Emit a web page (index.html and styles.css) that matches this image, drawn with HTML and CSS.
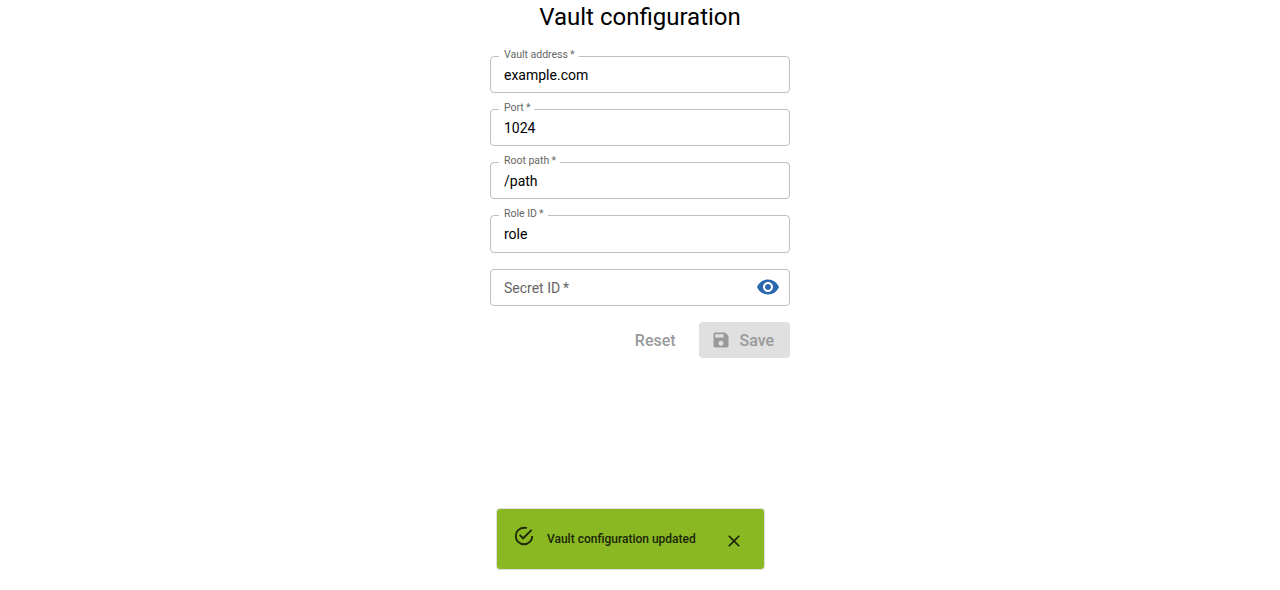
FILE: index.html
```html
<!DOCTYPE html>
<html lang="en">
<head>
<meta charset="utf-8">
<title>Vault configuration</title>
<link rel="stylesheet" href="styles.css">
</head>
<body>
<main class="page">
  <h1 class="title">Vault configuration</h1>
  <form class="form">
    <div class="field"><label class="label">Vault address&thinsp;*</label><span class="value">example.com</span></div>
    <div class="field"><label class="label">Port&thinsp;*</label><span class="value">1024</span></div>
    <div class="field"><label class="label">Root path&thinsp;*</label><span class="value">/path</span></div>
    <div class="field field-tall"><label class="label">Role ID&thinsp;*</label><span class="value">role</span></div>
    <div class="field"><span class="value placeholder">Secret ID&thinsp;*</span>
      <svg class="eye" viewBox="0 0 24 24"><path d="M12 4.5C7 4.5 2.73 7.61 1 12c1.73 4.39 6 7.5 11 7.5s9.27-3.11 11-7.5c-1.73-4.39-6-7.5-11-7.5zM12 17c-2.76 0-5-2.24-5-5s2.24-5 5-5 5 2.24 5 5-2.24 5-5 5zm0-8c-1.66 0-3 1.34-3 3s1.34 3 3 3 3-1.34 3-3-1.34-3-3-3z"/></svg>
    </div>
    <div class="actions">
      <button class="button reset" type="button" disabled>Reset</button>
      <button class="button save" type="button" disabled><svg class="disk" viewBox="0 0 24 24"><path d="M17 3H5c-1.11 0-2 .9-2 2v14c0 1.1.89 2 2 2h14c1.1 0 2-.9 2-2V7l-4-4zm-5 16c-1.66 0-3-1.34-3-3s1.34-3 3-3 3 1.34 3 3-1.34 3-3 3zm3-10H5V5h10v4z"/></svg><span class="save-text">Save</span></button>
    </div>
  </form>
</main>
<div class="snackbar">
  <svg class="check" viewBox="0 0 24 24"><path d="M20,12A8,8 0 0,1 12,20A8,8 0 0,1 4,12A8,8 0 0,1 12,4C12.76,4 13.5,4.11 14.2,4.31L15.77,2.74C14.61,2.26 13.34,2 12,2A10,10 0 0,0 2,12A10,10 0 0,0 12,22A10,10 0 0,0 22,12M7.91,10.08L6.5,11.5L11,16L21,6L19.59,4.58L11,13.17L7.91,10.08Z"/></svg>
  <span class="message">Vault configuration updated</span>
  <svg class="close" viewBox="0 0 24 24"><path d="M19 6.41L17.59 5 12 10.59 6.41 5 5 6.41 10.59 12 5 17.59 6.41 19 12 13.41 17.59 19 19 17.59 13.41 12z"/></svg>
</div>
</body>
</html>
```

FILE: styles.css
```css
* { box-sizing: border-box; }
body {
  margin: 0;
  height: 590px;
  overflow: hidden;
  position: relative;
  background: #fff;
  color: #000;
  font-family: Roboto, "Liberation Sans", sans-serif;
}
.page { display: flex; flex-direction: column; align-items: center; }
.title { margin: 0 0 22px; font-size: 24px; line-height: 34px; font-weight: 400; }
.form { display: flex; flex-direction: column; gap: 16px; width: 300px; }
.field {
  position: relative;
  display: flex;
  align-items: center;
  justify-content: space-between;
  height: 37px;
  padding: 0 9px 0 13px;
  border: 1px solid #bfbfbf;
  border-radius: 4px;
}
.field-tall { height: 38px; }
.label {
  position: absolute;
  left: 8px;
  top: -10px;
  padding: 0 5.5px 0 6.67px;
  background: #fff;
  color: #666;
  font-size: 14px;
  line-height: 20px;
  transform: scale(0.75);
  transform-origin: 0 0;
  white-space: nowrap;
}
.value { font-size: 14px; line-height: 20px; }
.placeholder { color: #666; }
.eye { width: 24px; height: 24px; margin-bottom: 1px; fill: #2b66ae; }
.actions { display: flex; justify-content: flex-end; gap: 15px; }
.button {
  display: flex;
  align-items: center;
  height: 36px;
  border: 0;
  border-radius: 4px;
  background: none;
  color: #999;
  font: 500 16px/24px Roboto, "Liberation Sans", sans-serif;
}
.reset { padding: 2px 8.4px 0 8px; }
.save { width: 91px; padding: 0 0 0 12px; background: #e0e0e0; }
.save-text { padding-top: 2px; }
.disk { width: 20px; height: 20px; margin-right: 8.5px; fill: #999; }
.snackbar {
  position: absolute;
  left: 496px;
  top: 508px;
  width: 269px;
  height: 62px;
  display: flex;
  align-items: center;
  padding-left: 16px;
  border: 1px solid #dedede;
  border-radius: 4px;
  background: #89b823;
  color: #1b2507;
}
.check { width: 22px; height: 22px; margin: 0 12px 6px 0; fill: currentColor; }
.message { width: 177px; font-size: 12px; line-height: 18px; font-weight: 500; white-space: nowrap; }
.close { width: 20px; height: 20px; margin-top: 4px; fill: currentColor; }
```
